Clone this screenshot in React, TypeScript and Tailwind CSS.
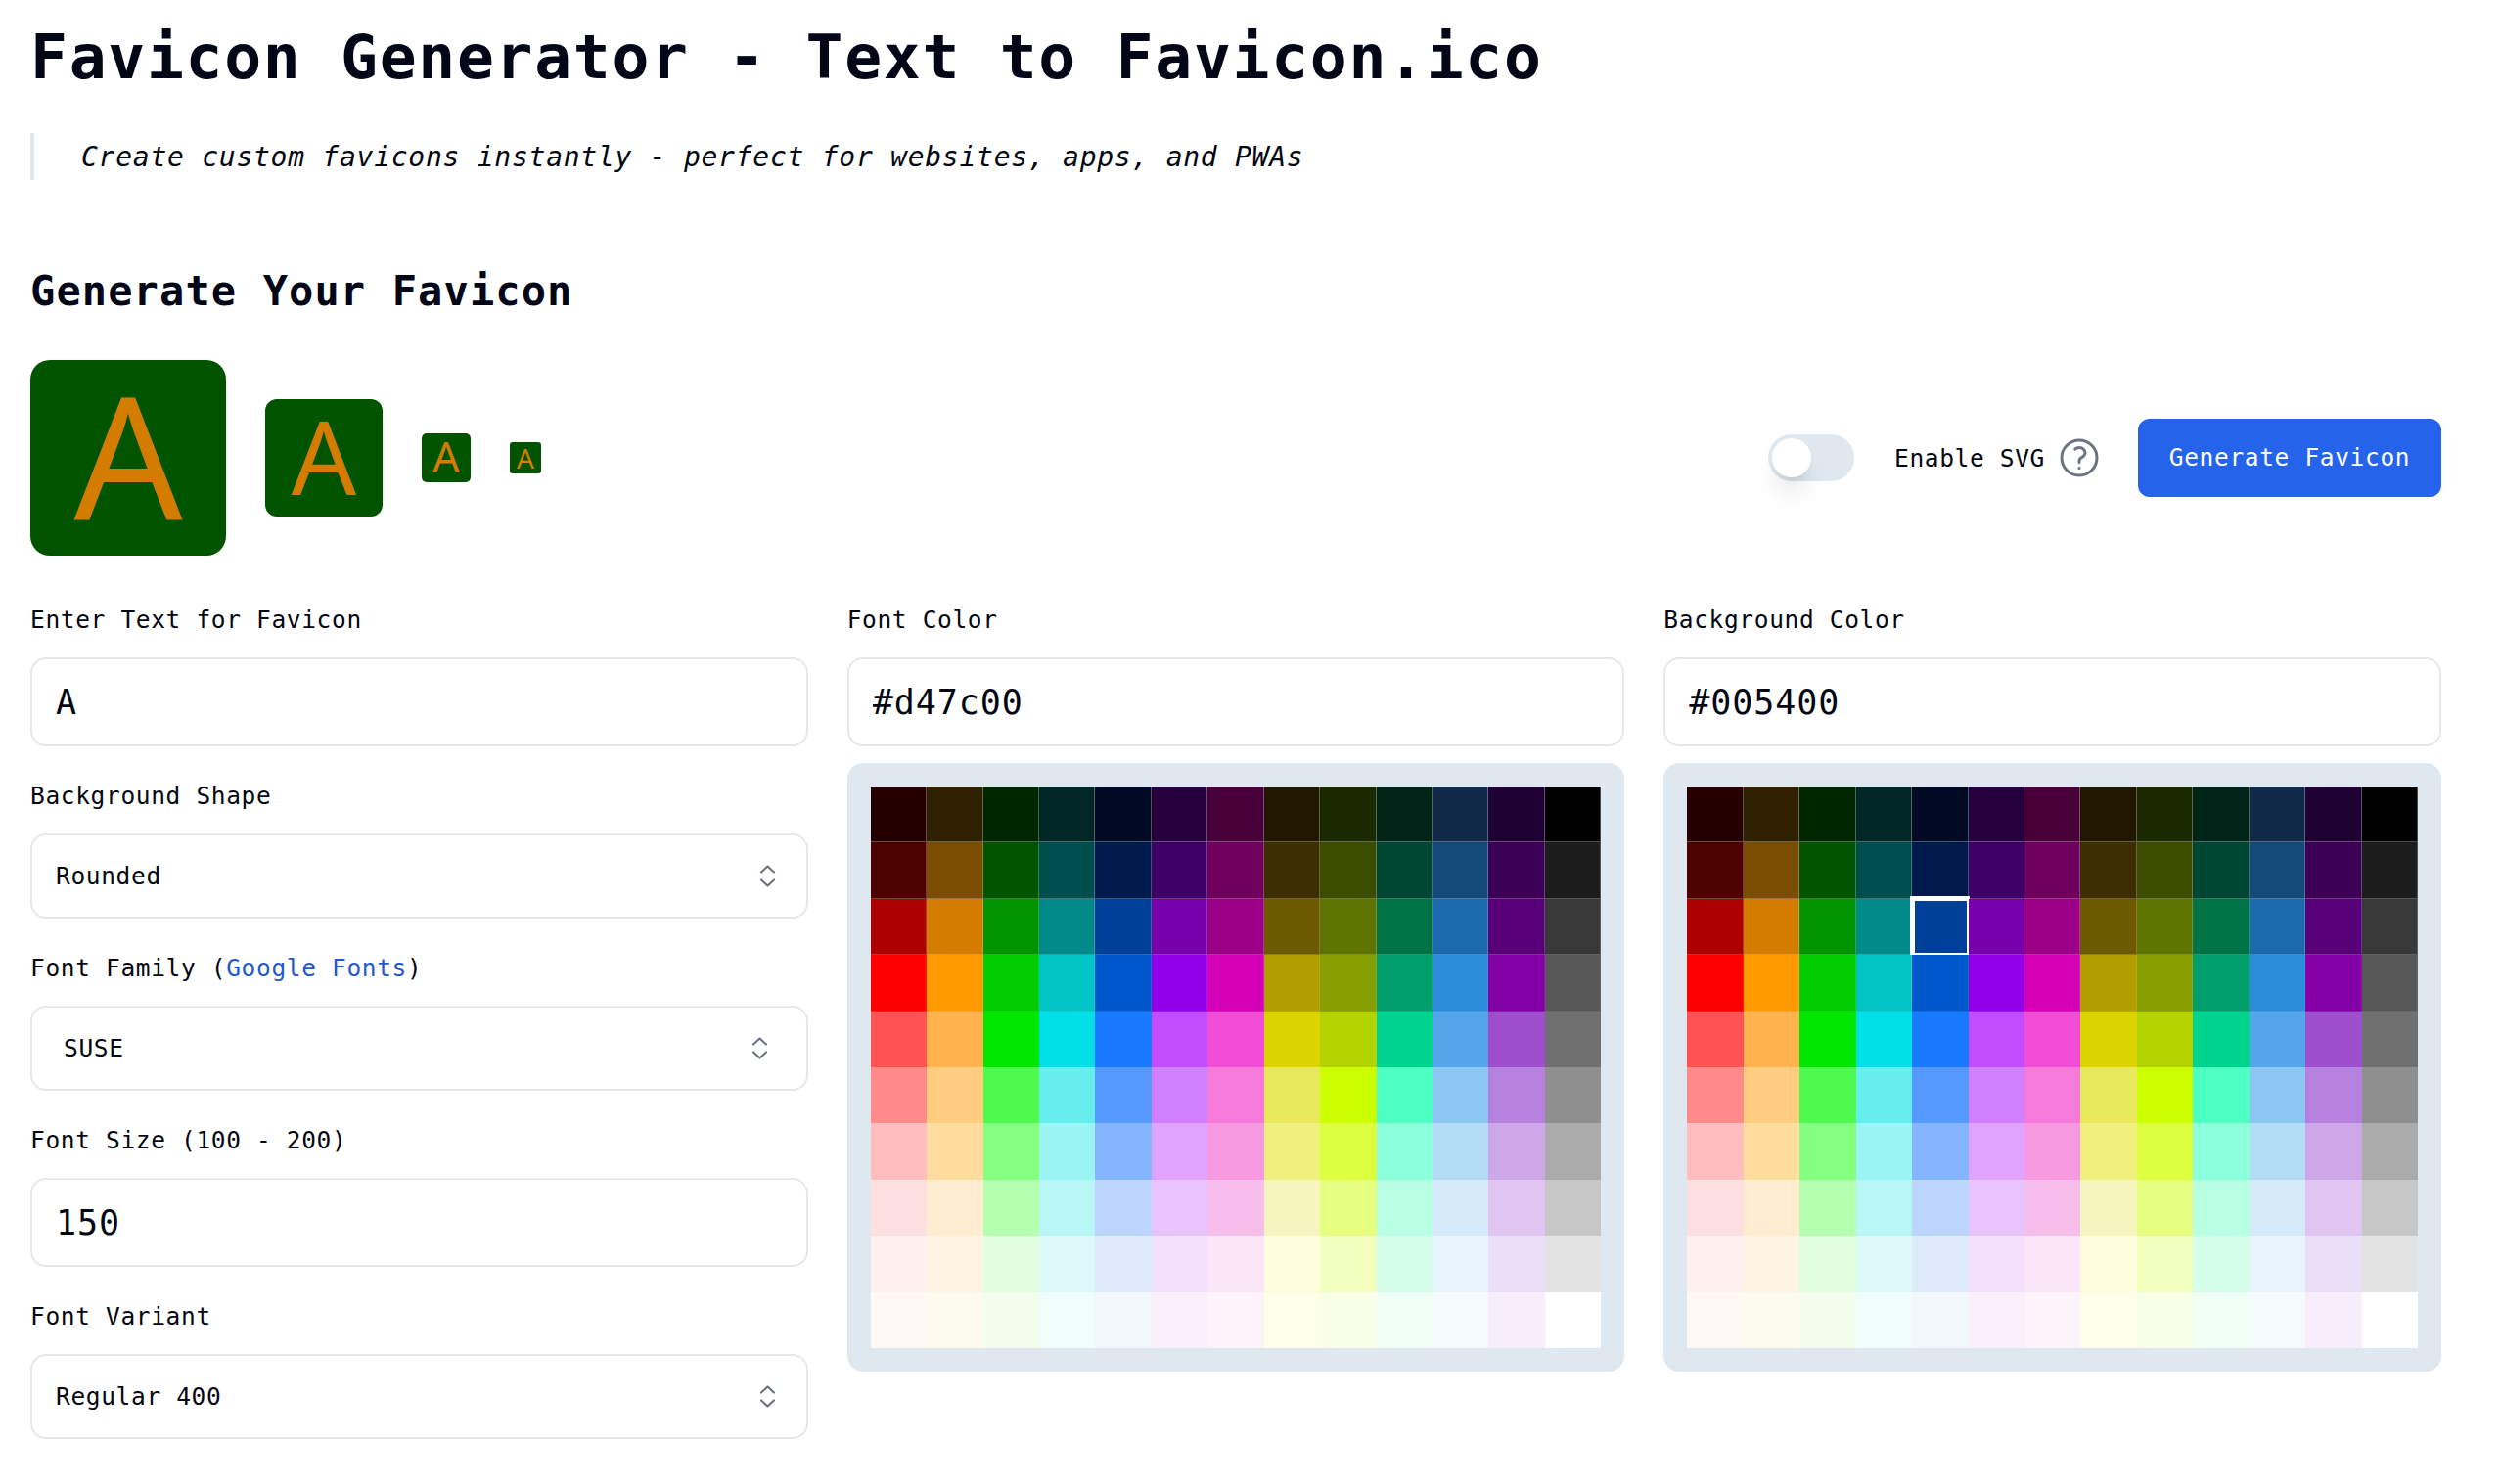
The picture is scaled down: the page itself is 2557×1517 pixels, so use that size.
const palette = [
  ['#240000', '#2e2000', '#002600', '#002626', '#000a24', '#26003d', '#470038', '#1f1700', '#1a2900', '#002417', '#0f2947', '#1f0033', '#000000'],
  ['#4d0000', '#7a4d00', '#005400', '#004d4d', '#001a4d', '#3d0066', '#70005e', '#3d2e00', '#3d4d00', '#004733', '#144a7a', '#3d0057', '#1c1c1c'],
  ['#ad0000', '#d47c00', '#009400', '#008a8a', '#004099', '#7700ad', '#9c0087', '#6b5a00', '#5e7300', '#007347', '#1a69ad', '#570078', '#383838'],
  ['#ff0000', '#ff9900', '#00cc00', '#00c4c4', '#0059cc', '#9100e6', '#d400b8', '#b39e00', '#879e00', '#009e6b', '#2b8cdb', '#8300a6', '#575757'],
  ['#ff5252', '#ffb24d', '#00e600', '#00e0e6', '#1a7aff', '#c24dff', '#f24dd6', '#dbd400', '#b3d400', '#00d48f', '#54a6eb', '#9e4dcc', '#707070'],
  ['#ff8a8a', '#ffcc80', '#4dfa4d', '#66eded', '#5599ff', '#d180ff', '#f57ada', '#e8e85c', '#ccff00', '#4dffc2', '#8cc7f2', '#b580de', '#8f8f8f'],
  ['#ffbdbd', '#ffdd9e', '#85ff7f', '#9cf5f5', '#85b5ff', '#e0a3ff', '#f799e0', '#f0f07f', '#ddff40', '#8cffdb', '#b3ddf5', '#cca8e8', '#ababab'],
  ['#ffe0e0', '#ffecd1', '#b5ffb0', '#b8f7f5', '#bdd6ff', '#e8c4ff', '#f7bdeb', '#f7f5bf', '#e6ff80', '#b8ffe3', '#d6ebf9', '#e0c5f2', '#c7c7c7'],
  ['#fff0f0', '#fdf4e3', '#e1ffdf', '#def9fa', '#deebfb', '#f2e0fc', '#fae6f7', '#fffcdb', '#f2ffbf', '#d6ffeb', '#e8f5fc', '#ebdef7', '#e3e3e3'],
  ['#fff8f5', '#fcf9ed', '#f2fded', '#effdfd', '#f2f7fb', '#faf0fc', '#fdf3fa', '#fdffe8', '#f9ffe6', '#f0fff5', '#f5fafd', '#f7edfb', '#ffffff'],
];

// faint seams between the dark swatches
const rowSeams = [
  'shadow-[inset_-1px_-1px_0_rgba(255,255,255,0.3)]',
  'shadow-[inset_-1px_-1px_0_rgba(255,255,255,0.25)]',
  'shadow-[inset_-1px_-1px_0_rgba(255,255,255,0.2)]',
  'shadow-[inset_-1px_-1px_0_rgba(255,255,255,0.1)]',
];

function ChevronUpDown() {
  return (
    <svg width="17" height="23" viewBox="0 0 17 23" fill="none" stroke="#6b7280" strokeWidth="2.2" strokeLinejoin="round" strokeLinecap="round">
      <path d="M2 7.5 8.5 1.5 15 7.5" />
      <path d="M2 15.5 8.5 21.5 15 15.5" />
    </svg>
  );
}

function Label({ children }: { children: React.ReactNode }) {
  return <label className="block h-[40px] mb-[19px] text-[24.5px] tracking-[0.65px] leading-[42px] text-[#030712]">{children}</label>;
}

function TextField({ value }: { value: string }) {
  return (
    <input
      readOnly
      value={value}
      className="block w-full h-[91px] border-2 border-[#e5e7eb] rounded-2xl px-[24px] text-[35px] tracking-[0.93px] text-[#030712] bg-white outline-none"
    />
  );
}

function SelectField({ value, inset = false }: { value: string; inset?: boolean }) {
  return (
    <div
      className={
        inset
          ? 'flex items-center justify-between h-[87px] border-2 border-[#e5e7eb] rounded-2xl pl-[32px] pr-[39px] text-[24.5px] tracking-[0.65px] text-[#030712]'
          : 'flex items-center justify-between h-[87px] border-2 border-[#e5e7eb] rounded-2xl pl-[24px] pr-[31px] text-[24.5px] tracking-[0.65px] text-[#030712]'
      }
    >
      <span className="pt-[2px]">{value}</span>
      <ChevronUpDown />
    </div>
  );
}

function ColorPanel({ selected }: { selected?: [number, number] }) {
  return (
    <div className="mt-[17px] p-[24px] rounded-2xl bg-[#e0e8ef]">
      <div className="grid grid-cols-[repeat(13,1fr)]">
        {palette.map((row, r) =>
          row.map((color, c) => (
            <div
              key={`${r}-${c}`}
              className={`relative h-[57.4px] ${r < 4 ? rowSeams[r] : ''}`}
              style={{ backgroundColor: color }}
            >
              {selected && selected[0] === r && selected[1] === c && (
                <div className="absolute -left-[2px] -top-[3px] -right-[1px] -bottom-[1px] border-white border-l-[5px] border-t-[5px] border-r-[3px] border-b-[3px]" />
              )}
            </div>
          )),
        )}
      </div>
    </div>
  );
}

function Preview({ box, text, round, pad }: { box: string; text: string; round: string; pad: string }) {
  return (
    <div className={`flex items-center justify-center bg-[#005400] text-[#d47c00] font-['Noto_Sans',sans-serif] leading-none ${box} ${round} ${pad}`}>
      <span className={text}>A</span>
    </div>
  );
}

export default function App() {
  return (
    <div className="w-[2464px] ml-[31px] pt-[19px] font-['DejaVu_Sans_Mono',monospace] text-[#030712] bg-white">
      <h1 className="text-[63px] tracking-[1.7px] leading-[80px] font-bold text-[#020617]">Favicon Generator - Text to Favicon.ico</h1>

      <blockquote className="mt-[37px] h-[48px] border-l-4 border-[#e0e8ef] pl-[48px] text-[28px] tracking-[0.74px] leading-[50px] italic">
        Create custom favicons instantly - perfect for websites, apps, and PWAs
      </blockquote>

      <h2 className="mt-[82px] text-[42px] tracking-[1.12px] leading-[64px] font-bold text-[#020617]">Generate Your Favicon</h2>

      <div className="mt-[38px] flex items-center justify-between h-[200px]">
        <div className="flex items-center gap-[40px]">
          <Preview box="w-[200px] h-[200px]" text="text-[174px]" round="rounded-[20px]" pad="pb-[8px]" />
          <Preview box="w-[120px] h-[120px]" text="text-[104px]" round="rounded-[12px]" pad="pb-[5px]" />
          <Preview box="w-[50px] h-[50px]" text="text-[43.5px]" round="rounded-[5px]" pad="pb-[2px]" />
          <Preview box="w-[32px] h-[32px]" text="text-[28px]" round="rounded-[3px]" pad="pb-[1px]" />
        </div>

        <div className="flex items-center">
          <div className="w-[88px] h-[48px] rounded-full bg-[#e0e8ef] p-[4px]">
            <div className="w-[40px] h-[40px] rounded-full bg-white shadow-[0_20px_25px_-5px_rgba(0,0,0,0.1),0_8px_10px_-6px_rgba(0,0,0,0.1)]" />
          </div>
          <span className="ml-[41px] pt-[2px] text-[24.5px] tracking-[0.65px] text-[#030712]">Enable SVG</span>
          <svg className="ml-[11px]" width="48" height="48" viewBox="0 0 24 24" fill="none" stroke="#6b7280" strokeWidth="1.5" strokeLinecap="round" strokeLinejoin="round">
            <path d="M9.879 7.519c1.171-1.025 3.071-1.025 4.242 0 1.172 1.025 1.172 2.687 0 3.712-.203.179-.43.326-.67.442-.745.361-1.45.999-1.45 1.827v.75M21 12a9 9 0 11-18 0 9 9 0 0118 0zm-9 5.25h.008v.008H12v-.008z" />
          </svg>
          <button className="ml-[36px] w-[310px] h-[80px] pt-[1px] rounded-xl bg-[#2563eb] text-white text-[24.5px] tracking-[0.65px]">Generate Favicon</button>
        </div>
      </div>

      <div className="mt-[45px] grid grid-cols-3 gap-x-[40px]">
        <div>
          <Label>Enter Text for Favicon</Label>
          <TextField value="A" />
          <div className="mt-[30px]">
            <Label>Background Shape</Label>
            <SelectField value="Rounded" />
          </div>
          <div className="mt-[30px]">
            <Label>
              Font Family (<a className="text-[#2459c9]">Google Fonts</a>)
            </Label>
            <SelectField value="SUSE" inset />
          </div>
          <div className="mt-[30px]">
            <Label>Font Size (100 - 200)</Label>
            <TextField value="150" />
          </div>
          <div className="mt-[30px]">
            <Label>Font Variant</Label>
            <SelectField value="Regular 400" />
          </div>
        </div>

        <div>
          <Label>Font Color</Label>
          <TextField value="#d47c00" />
          <ColorPanel />
        </div>

        <div>
          <Label>Background Color</Label>
          <TextField value="#005400" />
          <ColorPanel selected={[2, 4]} />
        </div>
      </div>
    </div>
  );
}
